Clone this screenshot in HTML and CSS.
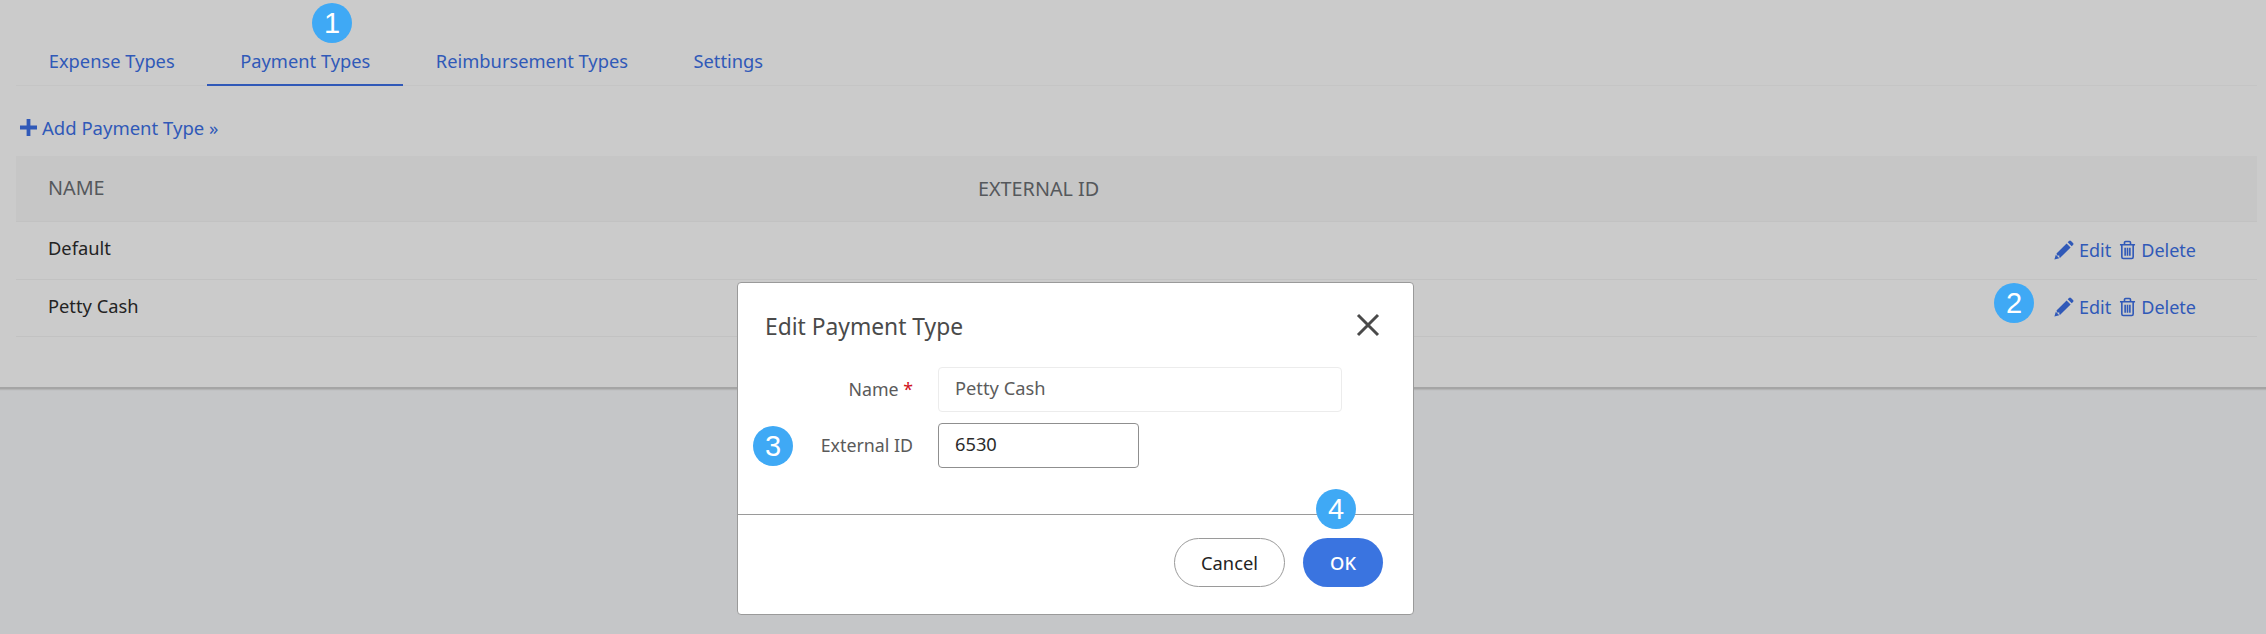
FILE: index.html
```html
<!DOCTYPE html>
<html lang="en">
<head>
<meta charset="utf-8">
<title>Payment Types</title>
<link rel="stylesheet" href="styles.css">
</head>
<body>
<div class="card">
  <nav class="tabs">
    <a class="tab">Expense Types</a>
    <a class="tab active">Payment Types</a>
    <a class="tab">Reimbursement Types</a>
    <a class="tab">Settings</a>
  </nav>
  <a class="add">
    <svg class="plus" viewBox="0 0 18 18"><path d="M7 0h4v7h7v4h-7v7H7v-7H0V7h7z"/></svg>
    <span>Add Payment Type »</span>
  </a>
  <div class="table">
    <div class="row head"><div class="c1">NAME</div><div class="c2">EXTERNAL ID</div></div>
    <div class="row">
      <div class="c1">Default</div><div class="c2"></div>
      <div class="actions">
        <a class="act"><svg class="ico" viewBox="0 0 20 20"><path d="M13.700 2.300 15 1a1.400 1.400 0 0 1 2 0l2 2a1.400 1.400 0 0 1 0 2l-1.300 1.300zM12.600 3.400l4 4L6.200 17.800l-.9-.3V15.400H3.100L2.500 13.500zM1.800 14.700l3.500 3.500L.4 19.600z"/></svg>Edit</a>
        <a class="act"><svg class="ico trash" viewBox="0 0 18 20"><path d="M1 4.500h16M3 4.500V17.500a1.500 1.500 0 0 0 1.500 1.500h9a1.500 1.500 0 0 0 1.500-1.500V4.500M5.800 4.500V2.200A1.200 1.200 0 0 1 7 1h4a1.200 1.200 0 0 1 1.200 1.200V4.500M6.500 7.500v8.500M9 7.500v8.500M11.500 7.500v8.500"/></svg>Delete</a>
      </div>
    </div>
    <div class="row">
      <div class="c1">Petty Cash</div><div class="c2"></div>
      <div class="actions">
        <a class="act"><svg class="ico" viewBox="0 0 20 20"><path d="M13.700 2.300 15 1a1.400 1.400 0 0 1 2 0l2 2a1.400 1.400 0 0 1 0 2l-1.300 1.300zM12.600 3.400l4 4L6.200 17.800l-.9-.3V15.400H3.100L2.500 13.500zM1.800 14.700l3.500 3.500L.4 19.600z"/></svg>Edit</a>
        <a class="act"><svg class="ico trash" viewBox="0 0 18 20"><path d="M1 4.500h16M3 4.500V17.500a1.500 1.500 0 0 0 1.500 1.500h9a1.500 1.500 0 0 0 1.500-1.500V4.500M5.800 4.500V2.200A1.200 1.200 0 0 1 7 1h4a1.200 1.200 0 0 1 1.200 1.200V4.500M6.500 7.500v8.500M9 7.500v8.500M11.500 7.500v8.500"/></svg>Delete</a>
      </div>
    </div>
  </div>
</div>

<div class="modal">
  <div class="m-head">
    <h2 class="m-title">Edit Payment Type</h2>
    <svg class="close" viewBox="0 0 24 24"><path d="M2 2l20 20M22 2L2 22"/></svg>
  </div>
  <div class="m-body">
    <div class="field">
      <label class="lbl">Name <span class="req">*</span></label>
      <div class="input disabled">Petty Cash</div>
    </div>
    <div class="field">
      <label class="lbl">External ID</label>
      <div class="input short">6530</div>
    </div>
  </div>
  <div class="m-foot">
    <button class="btn cancel">Cancel</button>
    <button class="btn ok">OK</button>
  </div>
</div>

<span class="badge b1">1</span>
<span class="badge b2">2</span>
<span class="badge b3">3</span>
<span class="badge b4">4</span>
</body>
</html>
```
FILE: styles.css
```css
* { box-sizing: border-box; }
html, body { height: 100%; }
body {
  margin: 0;
  height: 634px;
  overflow: hidden;
  background: #c5c6c8;
  font-family: "Noto Sans", "Open Sans", sans-serif;
  font-size: 18.3px;
  color: #232323;
  position: relative;
}
a { color: #3059b8; text-decoration: none; }

.card {
  height: 389px;
  background: #cbcbcb;
  padding: 0 9px 0 16px;
  border-bottom: 2px solid #a5a5a5;
  box-shadow: 0 1px 1px #b4b4b4;
}
.tabs {
  display: flex;
  padding-top: 41px;
  height: 86px;
  border-bottom: 1px solid #c5c5c5;
}
.tab {
  padding: 0 32.75px;
  height: 45px;
  line-height: 40px;
  margin-bottom: -1px;
  white-space: nowrap;
  font-size: 18.3px;
}
.tab.active { border-bottom: 2px solid #3059b8; }

.add {
  display: flex;
  align-items: center;
  gap: 5px;
  height: 70px;
  padding: 13px 0 0 4px;
  font-size: 18.5px;
}
.plus { width: 17px; height: 17px; fill: #3059b8; }

.table { display: flex; flex-direction: column; }
.row {
  display: flex;
  align-items: center;
  height: 57.5px;
  padding: 0 0 3px 32px;
  border-bottom: 1px solid #c2c2c2;
}
.row.head {
  height: 66px;
  padding-bottom: 0;
  background: #c6c6c6;
  color: #55585c;
  font-size: 19.8px;
}
.c1 { width: 930px; padding-bottom: 2px; }
.c2 { flex: 1; }
.actions { display: flex; gap: 8px; margin: 2px 61px 0 0; font-size: 18px; }
.act { display: flex; align-items: center; gap: 5px; }
.ico { width: 20px; height: 20px; fill: #3059b8; }
.ico.trash { width: 17px; fill: none; stroke: #3059b8; stroke-width: 1.7; }

.modal {
  position: absolute;
  left: 737px;
  top: 282px;
  width: 677px;
  height: 333px;
  background: #fff;
  border: 1px solid #9a9a9a;
  border-radius: 4px;
  display: flex;
  flex-direction: column;
}
.m-head {
  display: flex;
  align-items: center;
  justify-content: space-between;
  height: 84px;
  padding: 0 33px 0 27px;
}
.m-title { margin: 0; padding-top: 3px; font-size: 22.8px; font-weight: 400; color: #4a4a4a; }
.close { width: 24px; height: 24px; fill: none; stroke: #4a4a4a; stroke-width: 3; }
.m-body {
  flex: 1;
  display: flex;
  flex-direction: column;
  gap: 11px;
  border-bottom: 1px solid #9a9a9a;
}
.field { display: flex; align-items: center; gap: 25px; }
.lbl { width: 175px; text-align: right; color: #5a5a5a; padding-bottom: 2px; white-space: nowrap; font-size: 17.8px; }
.req { color: #d0111b; }
.input {
  width: 404px;
  height: 45px;
  line-height: 39px;
  padding: 0 16px;
  border: 1px solid #8f8f8f;
  border-radius: 4px;
  color: #2b2b2b;
}
.input.disabled { border-color: #ececec; color: #5c5c5c; }
.input.short { width: 201px; }

.m-foot {
  display: flex;
  justify-content: flex-end;
  gap: 18px;
  height: 99px;
  padding: 23px 30px 0 0;
}
.btn {
  height: 49px;
  border-radius: 25px;
  font: inherit;
}
.cancel { width: 111px; background: #fff; border: 1px solid #9a9a9a; color: #232323; }
.ok { width: 80px; background: #3a74e0; border: 0; color: #fff; font-weight: 500; }

.badge {
  position: absolute;
  width: 40px;
  height: 40px;
  border-radius: 50%;
  background: #3fa9f5;
  color: #fff;
  font-family: "Liberation Sans", sans-serif;
  font-size: 29px;
  line-height: 40px;
  text-align: center;
}
.b1 { left: 312px; top: 3px; }
.b2 { left: 1994px; top: 283px; }
.b3 { left: 753px; top: 426px; }
.b4 { left: 1316px; top: 489px; }
```
